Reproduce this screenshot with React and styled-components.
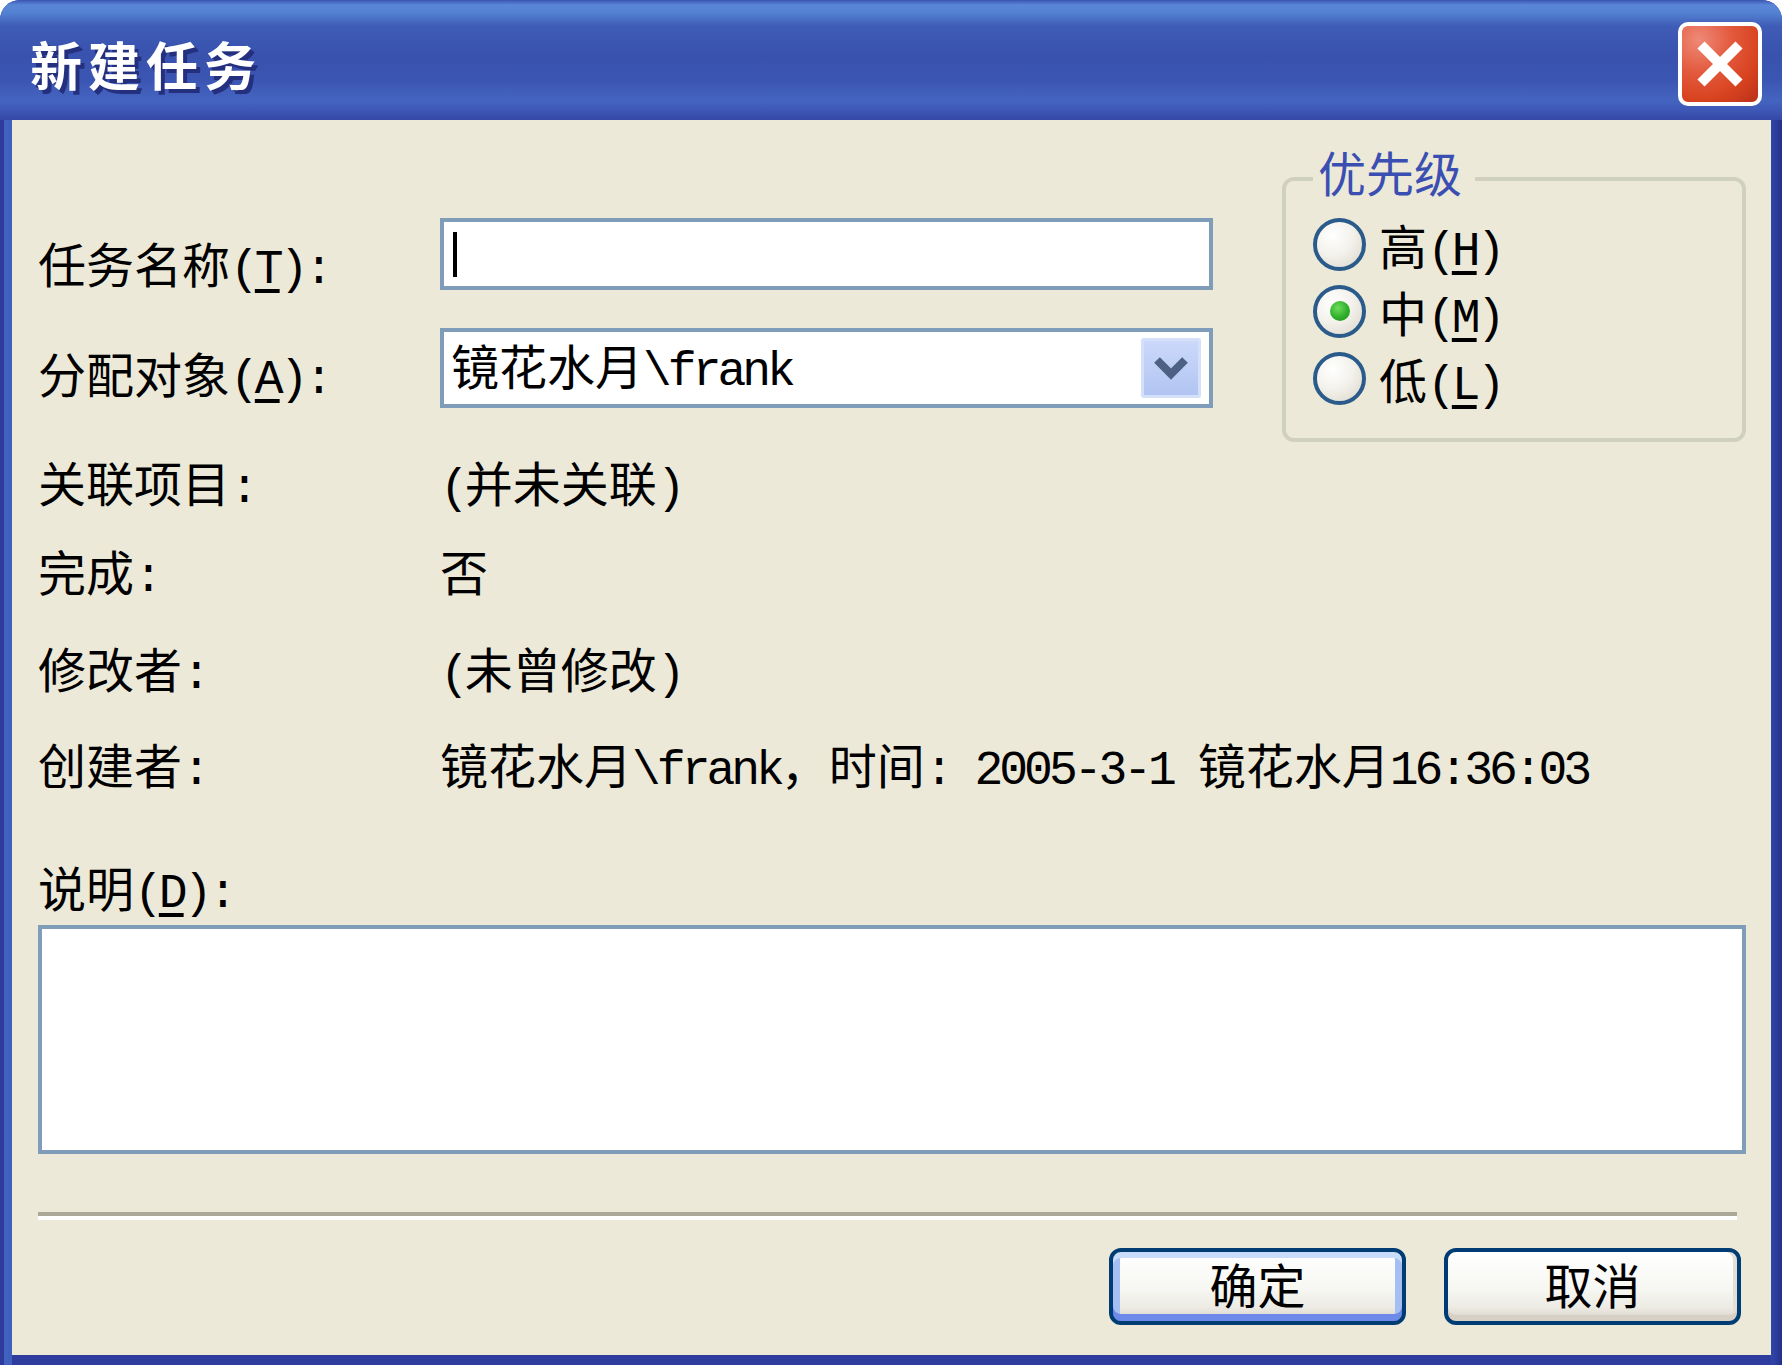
import React from 'react';
import styled, { createGlobalStyle } from 'styled-components';

const FONT = `"Noto Sans CJK SC", "Noto Sans", sans-serif`;

const GlobalStyle = createGlobalStyle`
  html, body { margin: 0; padding: 0; background: #ffffff; }
  body { font-family: ${FONT}; color: #000; }
  * { box-sizing: border-box; }
`;

// ASCII runs are drawn half-width, as the old bitmap font did
function Mixed({ text }) {
  return text
    .split(/([\x20-\x7e]+)/)
    .map((part, i) => (/^[\x20-\x7e]+$/.test(part) ? <Latin key={i}>{part}</Latin> : part));
}

function App() {
  return (
    <>
      <GlobalStyle />
      <Window>
        <TitleBar>
          <Title>新建任务</Title>
          <CloseButton aria-label="关闭">
            <svg width="46" height="46" viewBox="0 0 46 46">
              <path d="M4 4 L42 42 M42 4 L4 42" stroke="#fff" strokeWidth="10" />
            </svg>
          </CloseButton>
        </TitleBar>
        <Frame>
          <Client>
            <TopSection>
              <Form>
                <Row>
                  <Label $top={20}>任务名称<Latin>(<Key>T</Key>):</Latin></Label>
                  <TextBox><Caret /></TextBox>
                </Row>
                <Row $mt={38}>
                  <Label $top={20}>分配对象<Latin>(<Key>A</Key>):</Latin></Label>
                  <Combo>
                    <ComboText><Mixed text="镜花水月\frank" /></ComboText>
                    <DropButton>
                      <svg width="36" height="24" viewBox="0 0 36 24">
                        <polyline points="4,4 18,18 32,4" fill="none" stroke="#4d6185" strokeWidth="8" />
                      </svg>
                    </DropButton>
                  </Combo>
                </Row>
                <Row $mt={49}>
                  <Label><Mixed text="关联项目:" /></Label>
                  <Value><Mixed text="(并未关联)" /></Value>
                </Row>
                <Row $mt={41}>
                  <Label><Mixed text="完成:" /></Label>
                  <Value>否</Value>
                </Row>
                <Row $mt={49}>
                  <Label><Mixed text="修改者:" /></Label>
                  <Value><Mixed text="(未曾修改)" /></Value>
                </Row>
                <Row $mt={48}>
                  <Label><Mixed text="创建者:" /></Label>
                  <Value><Mixed text="镜花水月\frank，时间: 2005-3-1 镜花水月16:36:03" /></Value>
                </Row>
              </Form>
              <GroupBox>
                <Legend>优先级</Legend>
                <RadioList>
                  <RadioRow>
                    <Radio />
                    <RadioText>高<Latin>(<Key>H</Key>)</Latin></RadioText>
                  </RadioRow>
                  <RadioRow>
                    <Radio $checked />
                    <RadioText>中<Latin>(<Key>M</Key>)</Latin></RadioText>
                  </RadioRow>
                  <RadioRow>
                    <Radio />
                    <RadioText>低<Latin>(<Key>L</Key>)</Latin></RadioText>
                  </RadioRow>
                </RadioList>
              </GroupBox>
            </TopSection>
            <DescLabel>说明<Latin>(<Key>D</Key>):</Latin></DescLabel>
            <TextArea />
            <Separator />
            <ButtonBar>
              <DialogButton $default>确定</DialogButton>
              <DialogButton>取消</DialogButton>
            </ButtonBar>
          </Client>
        </Frame>
      </Window>
    </>
  );
}

export default App;

const Window = styled.div`
  width: 1782px;
  height: 1365px;
  display: flex;
  flex-direction: column;
  border-radius: 20px 20px 0 0;
  overflow: hidden;
  background: #2e3d9e;
`;

const TitleBar = styled.div`
  height: 120px;
  flex: none;
  display: flex;
  align-items: center;
  justify-content: space-between;
  padding: 8px 20px 0 30px;
  background: linear-gradient(
    to bottom,
    #3a55b3 0px,
    #5a86d6 5px,
    #5381d2 13px,
    #3f5cb6 26px,
    #3852ae 55px,
    #3b56b2 80px,
    #4464c0 100px,
    #3e58b6 110px,
    #3548a6 120px
  );
`;

const Title = styled.h1`
  margin: 0;
  font-family: ${FONT};
  font-size: 52px;
  font-weight: 700;
  letter-spacing: 6px;
  line-height: 56px;
  color: #ffffff;
  text-shadow: 4px 4px 0 #24307e;
`;

const CloseButton = styled.button`
  width: 84px;
  height: 84px;
  padding: 0;
  border: 4px solid #ffffff;
  border-radius: 10px;
  display: flex;
  align-items: center;
  justify-content: center;
  background: radial-gradient(circle at 22% 18%, #ee8a78 0%, #e35a3e 38%, #d8431f 70%, #b9301a 100%);
`;

const Frame = styled.div`
  flex: 1;
  display: flex;
  padding: 0 11px 10px 12px;
  background:
    linear-gradient(
      to right,
      #2f3b9b 0px,
      #2f3b9b 4px,
      #4262c0 4px,
      #3e5dbc 12px,
      transparent 12px,
      transparent calc(100% - 11px),
      #2f46a8 calc(100% - 11px),
      #2a3a98 calc(100% - 4px),
      #232f88 100%
    ),
    #2e3c9d;
`;

const Client = styled.div`
  flex: 1;
  display: flex;
  flex-direction: column;
  background: #ece9d8;
  padding: 27px 25px 30px 26px;
`;

const TopSection = styled.div`
  display: flex;
  justify-content: space-between;
  align-items: flex-start;
`;

const Form = styled.div`
  width: 1175px;
  display: flex;
  flex-direction: column;
  padding-top: 71px;
`;

const Row = styled.div`
  display: flex;
  align-items: flex-start;
  margin-top: ${p => p.$mt || 0}px;
`;

const Label = styled.div`
  width: 402px;
  flex: none;
  height: 48px;
  margin-top: ${p => p.$top || 0}px;
  font-size: 48px;
  line-height: 48px;
  white-space: nowrap;
`;

const Value = styled.div`
  height: 48px;
  font-size: 48px;
  line-height: 48px;
  white-space: nowrap;
`;

const Latin = styled.span`
  font-family: "Liberation Mono", "DejaVu Sans Mono", monospace;
  font-size: 48px;
  line-height: 0;
  letter-spacing: -4px;
  white-space: pre;
`;

const Key = styled.u`
  text-decoration-thickness: 4px;
  text-underline-offset: 6px;
`;

const TextBox = styled.div`
  width: 773px;
  height: 72px;
  border: 4px solid #7f9db9;
  background: #ffffff;
  display: flex;
  align-items: center;
  padding-left: 9px;
`;

const Caret = styled.span`
  width: 4px;
  height: 45px;
  background: #000;
`;

const Combo = styled.div`
  width: 773px;
  height: 80px;
  border: 4px solid #7f9db9;
  background: #ffffff;
  display: flex;
  align-items: center;
  justify-content: space-between;
  padding: 0 8px 0 7px;
`;

const ComboText = styled.span`
  height: 48px;
  margin-bottom: 8px;
  font-size: 48px;
  line-height: 48px;
  white-space: nowrap;
`;

const DropButton = styled.span`
  width: 60px;
  height: 60px;
  display: flex;
  align-items: center;
  justify-content: center;
  border: 3px solid #d4dff9;
  border-radius: 3px;
  background: linear-gradient(to bottom, #cbd8fa 0%, #bccdf5 60%, #b1c3f1 100%);
`;

const GroupBox = styled.fieldset`
  width: 464px;
  margin: 0;
  padding: 7px 20px 34px 27px;
  border: 4px solid #d0d0bf;
  border-radius: 12px;
`;

const Legend = styled.legend`
  padding: 0 13px 16px 5px;
  font-size: 48px;
  line-height: 48px;
  color: #3b4fb2;
`;

const RadioList = styled.div`
  display: flex;
  flex-direction: column;
  gap: 15px;
`;

const RadioRow = styled.div`
  display: flex;
  align-items: center;
  gap: 13px;
  height: 52px;
`;

const Radio = styled.span`
  width: 53px;
  height: 53px;
  flex: none;
  border-radius: 50%;
  border: 4px solid #2b5b8a;
  background: radial-gradient(circle at 35% 30%, #ffffff 0%, #f3f2ec 45%, #d9d5c8 100%);
  display: flex;
  align-items: center;
  justify-content: center;
  &::after {
    content: '';
    display: ${p => (p.$checked ? 'block' : 'none')};
    width: 20px;
    height: 20px;
    border-radius: 50%;
    background: radial-gradient(circle at 40% 35%, #6fdc5c 0%, #2fae2a 55%, #1f8f1f 100%);
  }
`;

const RadioText = styled.span`
  font-size: 48px;
  line-height: 48px;
  white-space: nowrap;
`;

const DescLabel = styled.div`
  margin-top: 75px;
  height: 48px;
  font-size: 48px;
  line-height: 48px;
`;

const TextArea = styled.div`
  margin-top: 15px;
  height: 229px;
  border: 4px solid #7f9db9;
  background: #ffffff;
`;

const Separator = styled.div`
  margin: 58px 9px 0 0;
  height: 8px;
  border-top: 4px solid #aca899;
  border-bottom: 4px solid #ffffff;
`;

const ButtonBar = styled.div`
  margin: 28px 5px 0 0;
  display: flex;
  justify-content: flex-end;
  gap: 38px;
`;

const DialogButton = styled.button`
  width: 297px;
  height: 77px;
  padding: 0 0 8px;
  border: 4px solid #003c74;
  border-radius: 12px;
  font-family: ${FONT};
  font-size: 48px;
  line-height: 48px;
  color: #000;
  background: linear-gradient(to bottom, #ffffff 0%, #f6f6f2 55%, #ecebe4 80%, #d8d2c6 100%);
  box-shadow: ${p =>
    p.$default
      ? 'inset 0 6px 0 #c9dcfa, inset 0 -7px 0 #6d89ea, inset 7px 0 0 #a6bff2, inset -7px 0 0 #a6bff2'
      : 'inset 0 -6px 0 #d6d0c5, inset -4px 0 0 #e2dfd6'};
`;
